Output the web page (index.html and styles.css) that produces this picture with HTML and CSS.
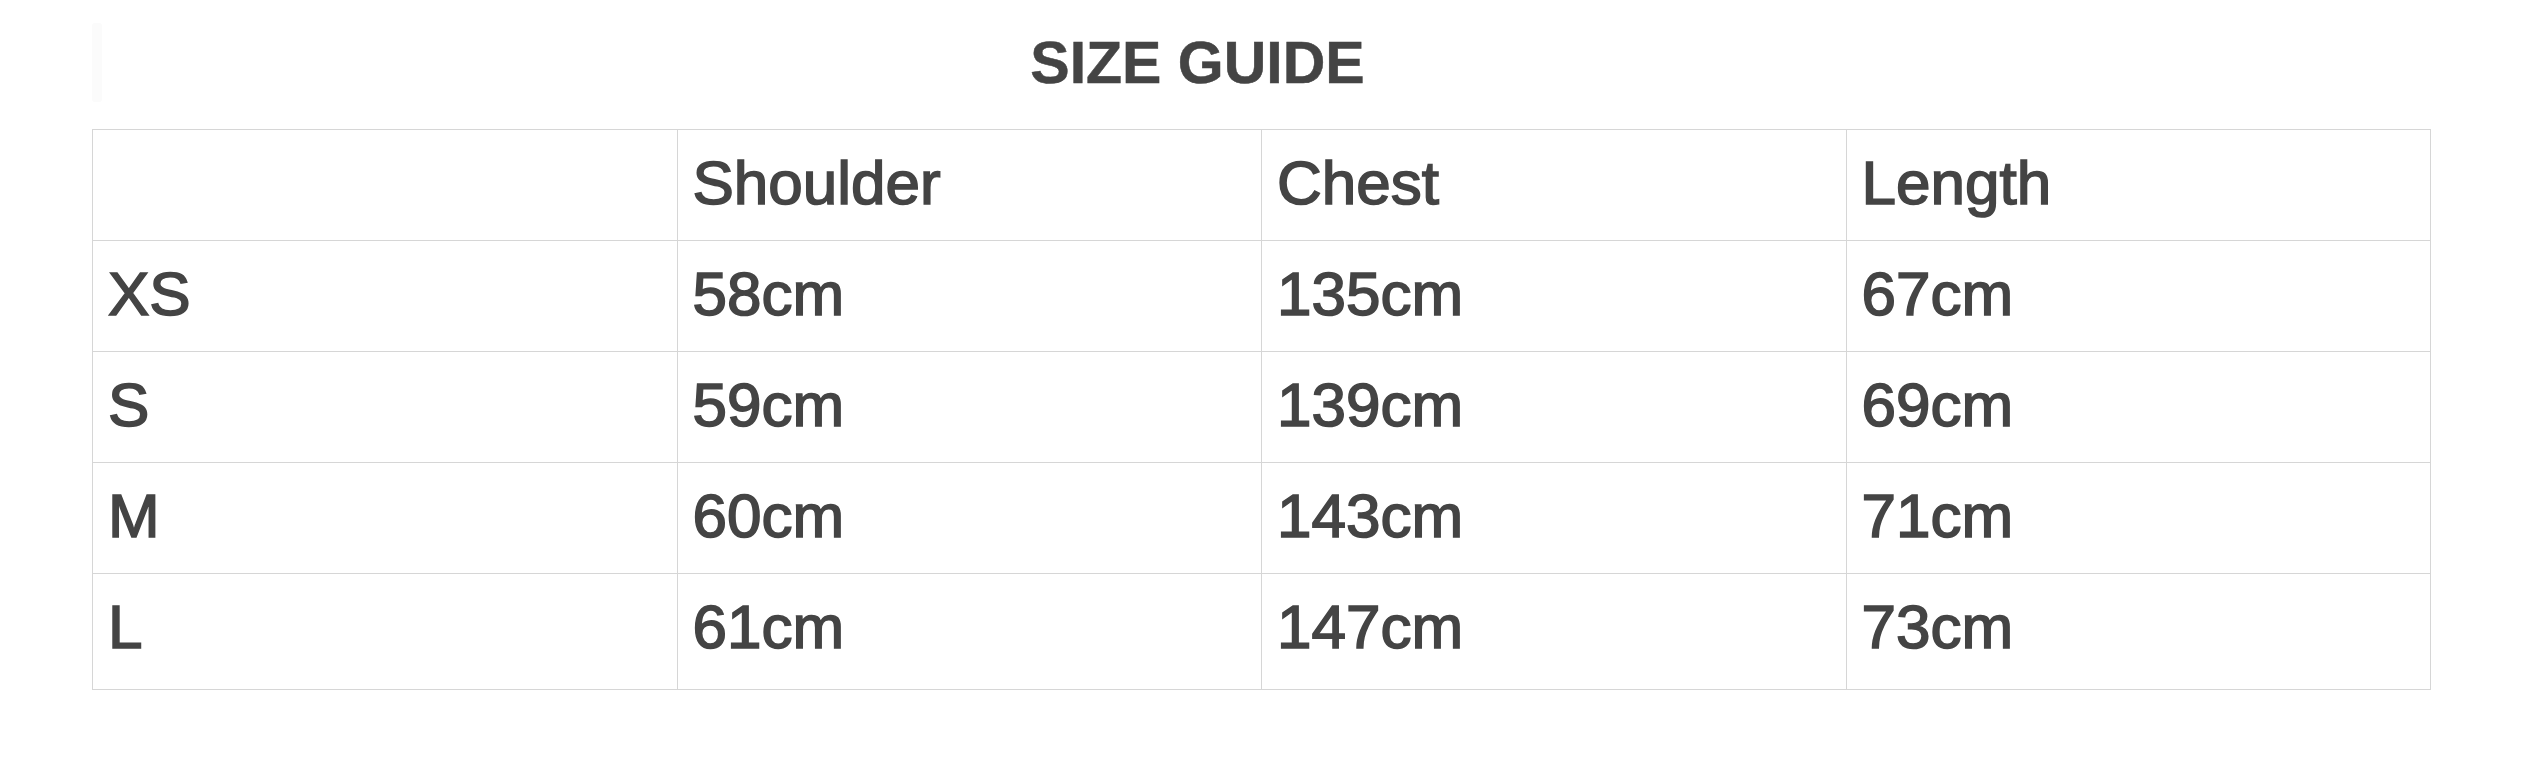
FILE: index.html
```html
<!DOCTYPE html>
<html lang="en">
<head>
<meta charset="utf-8">
<title>Size Guide</title>
<link rel="stylesheet" href="styles.css">
</head>
<body>
<main class="page">
  <header class="title-row">
    <span class="ghost-bar"></span>
    <h1 class="title">SIZE GUIDE</h1>
  </header>
  <table class="size-table">
    <colgroup>
      <col><col><col><col>
    </colgroup>
    <thead>
      <tr><th></th><th>Shoulder</th><th>Chest</th><th>Length</th></tr>
    </thead>
    <tbody>
      <tr><td>XS</td><td>58cm</td><td>135cm</td><td>67cm</td></tr>
      <tr><td>S</td><td>59cm</td><td>139cm</td><td>69cm</td></tr>
      <tr><td>M</td><td>60cm</td><td>143cm</td><td>71cm</td></tr>
      <tr><td>L</td><td>61cm</td><td>147cm</td><td>73cm</td></tr>
    </tbody>
  </table>
</main>
</body>
</html>
```
FILE: styles.css
```css
html, body {
  margin: 0;
  padding: 0;
  background: #ffffff;
}

body {
  font-family: "Liberation Sans", Arial, sans-serif;
  color: #444444;
}

.page {
  padding: 0 106px 0 92px;
}

.title-row {
  display: flex;
  align-items: flex-start;
  height: 129px;
}

.ghost-bar {
  display: block;
  width: 10px;
  height: 79px;
  margin-top: 23px;
  background: #fbfbfb;
  border-radius: 3px;
}

.title {
  flex: 1;
  margin: 0;
  padding: 29px 138px 0 0;
  text-align: center;
  font-size: 59px;
  line-height: 68px;
  font-weight: 700;
  color: #444444;
  -webkit-text-stroke: 0.5px #444444;
}

.size-table {
  width: 2339px;
  table-layout: fixed;
  border-collapse: collapse;
}

.size-table col {
  width: 25%;
}

.size-table th,
.size-table td {
  border: 1px solid #d6d6d6;
  padding: 17px 15px 22px;
  font-size: 62px;
  line-height: 71px;
  font-weight: 400;
  text-align: left;
  color: #444444;
  vertical-align: top;
  -webkit-text-stroke: 1.6px #444444;
}

.size-table tbody tr:last-child td {
  padding-bottom: 27px;
}
```
